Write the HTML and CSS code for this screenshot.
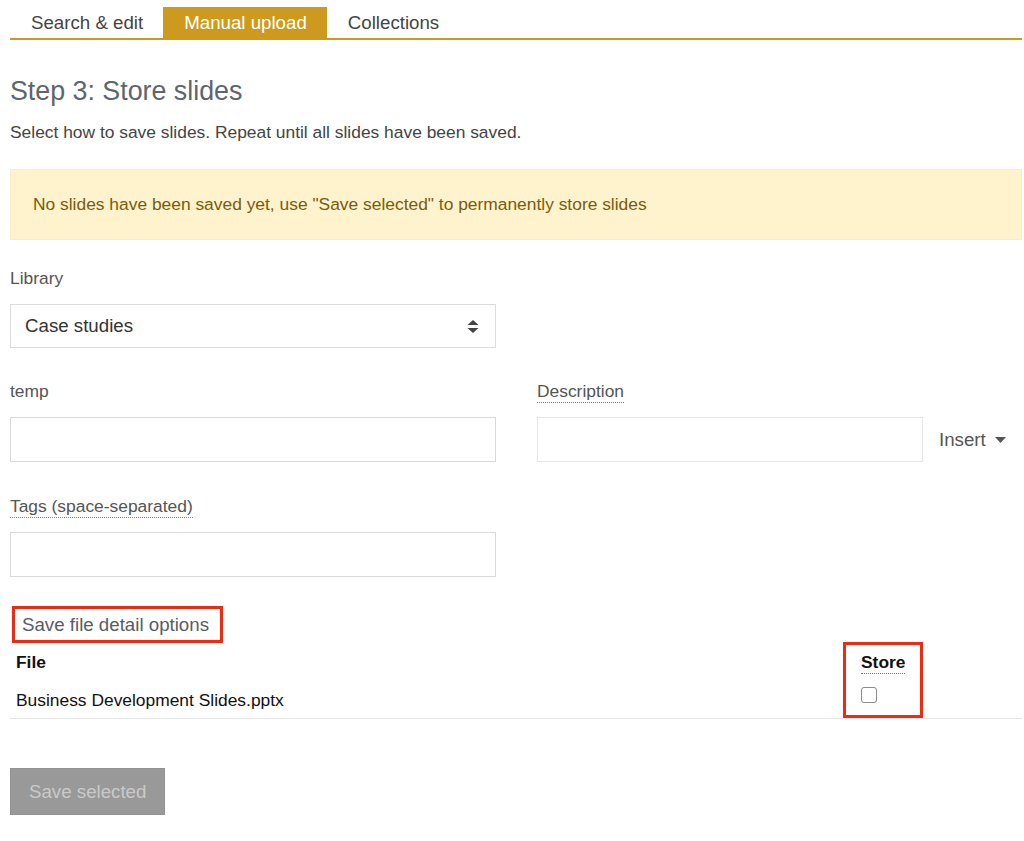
FILE: index.html
```html
<!DOCTYPE html>
<html>
<head>
<meta charset="utf-8">
<link rel="stylesheet" href="styles.css">
</head>
<body>
<div class="page">
  <ul class="tabs">
    <li class="tab">Search &amp; edit</li>
    <li class="tab active">Manual upload</li>
    <li class="tab">Collections</li>
  </ul>

  <h2 class="title">Step 3: Store slides</h2>
  <p class="intro">Select how to save slides. Repeat until all slides have been saved.</p>

  <div class="alert">No slides have been saved yet, use "Save selected" to permanently store slides</div>

  <div class="field lib">
    <label class="label">Library</label>
    <div class="select">
      <span>Case studies</span>
      <svg class="arrows" width="12" height="13" viewBox="0 0 12 13"><path d="M6 0 L11.5 5 L0.5 5 Z M6 13 L0.5 8 L11.5 8 Z" fill="#444"/></svg>
    </div>
  </div>

  <div class="row2">
    <div class="col">
      <div class="field">
        <label class="label">temp</label>
        <div class="input"></div>
      </div>
      <div class="field tags">
        <label class="label"><span class="dotted">Tags (space-separated)</span></label>
        <div class="input"></div>
      </div>
    </div>
    <div class="col right">
      <div class="field">
        <label class="label"><span class="dotted">Description</span></label>
        <div class="desc-row">
          <div class="input desc"></div>
          <div class="insert">Insert <svg width="11" height="6" viewBox="0 0 11 6"><path d="M0 0 L11 0 L5.5 6 Z" fill="#555"/></svg></div>
        </div>
      </div>
    </div>
  </div>

  <div class="legend">Save file detail options</div>

  <div class="table">
    <div class="thead">
      <div class="cell th">File</div>
      <div class="cell th"><span class="dotted dark">Store</span></div>
    </div>
    <div class="trow">
      <div class="cell">Business Development Slides.pptx</div>
      <div class="cell"><span class="checkbox"></span></div>
    </div>
    <div class="highlight"></div>
  </div>

  <button class="save" disabled>Save selected</button>
</div>
</body>
</html>
```

FILE: styles.css
```css
* { box-sizing: border-box; }
html, body { margin: 0; padding: 0; background: #fff; }
body { font-family: "Liberation Sans", Arial, Helvetica, sans-serif; color: #333; }
.page { padding: 0 2px 0 10px; }

.tabs {
  list-style: none;
  margin: 7px 0 0 0;
  padding: 0;
  display: flex;
  border-bottom: 2px solid #cd9a1e;
}
.tab {
  font-size: 18.7px;
  line-height: 21px;
  padding: 5px 20px 5px 21px;
  color: #444;
}
.tab.active { background: #cd9a1e; color: #fff; }

.title {
  margin: 36px 0 0 0;
  font-size: 26.8px;
  line-height: 30px;
  font-weight: normal;
  color: #5e656c;
}
.intro {
  margin: 16px 0 0 0;
  font-size: 17.4px;
  line-height: 20px;
  color: #444;
}
.alert {
  margin-top: 27px;
  background: #fff3cd;
  border: 1px solid #fcedc4;
  padding: 24px 22px;
  font-size: 17.4px;
  line-height: 21px;
  color: #7a5c0c;
}

.field { display: flex; flex-direction: column; }
.lib { margin-top: 28px; width: 486px; }
.label {
  font-size: 17.4px;
  line-height: 20px;
  color: #555;
  margin-bottom: 16px;
}
.dotted { border-bottom: 1px dotted #888; padding-bottom: 1px; }
.dotted.dark { border-bottom-color: #777; }
.select {
  height: 44px;
  border: 1px solid #dcdcdc;
  display: flex;
  align-items: center;
  justify-content: space-between;
  padding: 0 16px 0 14px;
  font-size: 18.7px;
  color: #333;
}
.arrows { display: block; }
.input {
  height: 45px;
  border: 1px solid #d9d9d9;
  background: #fff;
}

.row2 {
  display: flex;
  gap: 41px;
  margin-top: 33px;
}
.col { width: 486px; display: flex; flex-direction: column; }
.col.right { flex: 1; }
.tags { margin-top: 34px; }
.desc-row { display: flex; align-items: center; }
.input.desc { width: 386px; border-color: #e6e6e6; }
.insert {
  margin-left: 16px;
  font-size: 18.7px;
  color: #555;
  display: flex;
  align-items: center;
  gap: 9px;
}

.legend {
  margin: 29px 0 0 2px;
  display: inline-block;
  border: 3px solid #f02a10;
  padding: 5px 11px 5px 7px;
  font-size: 18.7px;
  line-height: 21px;
  color: #555d66;
}

.table { position: relative; margin-top: 9px; }
.thead, .trow { display: grid; grid-template-columns: 845px 1fr; }
.cell { padding: 0 6px; font-size: 17.4px; line-height: 20px; color: #111; }
.th { font-weight: bold; color: #111; }
.trow { padding: 18px 0 8px 0; border-bottom: 1px solid #e6e6e6; }
.checkbox {
  display: inline-block;
  width: 16px;
  height: 16px;
  border: 1.5px solid #8a8a8a;
  border-radius: 3px;
  vertical-align: top;
  margin-top: -3px;
}
.highlight {
  position: absolute;
  left: 833px;
  top: -10px;
  width: 80px;
  height: 76px;
  border: 3px solid #f02a10;
  pointer-events: none;
}

.save {
  margin-top: 49px;
  font-family: inherit;
  font-size: 18.7px;
  line-height: 21px;
  padding: 12px 18px;
  background: #999;
  color: #c9c9c9;
  border: 1px dotted #8c8c8c;
  border-radius: 0;
}
```
